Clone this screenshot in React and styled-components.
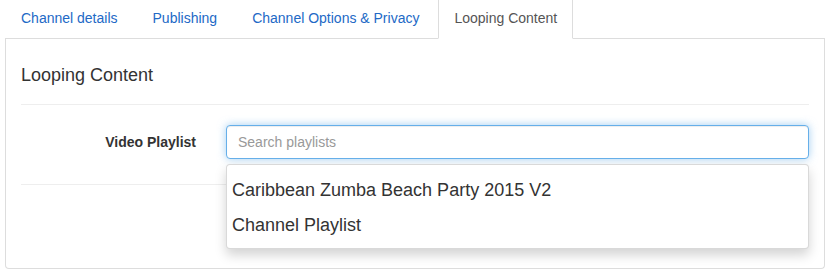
import React from "react";
import styled, { createGlobalStyle } from "styled-components";

const GlobalStyle = createGlobalStyle`
  html, body {
    margin: 0;
    padding: 0;
    background: #fff;
  }
  body {
    font-family: "Liberation Sans", Arial, Helvetica, sans-serif;
    font-size: 14px;
    color: #333;
  }
  * { box-sizing: border-box; }
`;

const Page = styled.div`
  width: 830px;
  padding: 0 5px;
`;

const Tabs = styled.ul`
  display: flex;
  list-style: none;
  margin: 0;
  padding: 0;
  border-bottom: 1px solid #ddd;
  height: 39px;
`;

const Tab = styled.li`
  margin-right: 3px;
  margin-bottom: -1px;
  padding: 8px 15px 10px;
  line-height: 20px;
  font-size: 14px;
  border: 1px solid transparent;
  border-top: none;
  height: 39px;
  color: ${(p) => (p.$active ? "#555" : "#2269c6")};
  background: ${(p) => (p.$active ? "#fff" : "transparent")};
  border-color: ${(p) => (p.$active ? "#ddd #ddd transparent" : "transparent")};
  cursor: pointer;
`;

const Panel = styled.div`
  border: 1px solid #ddd;
  border-top: none;
  border-radius: 0 0 4px 4px;
  padding: 26px 15px 0;
  height: 230px;
`;

const Heading = styled.h4`
  margin: 0;
  font-size: 18px;
  font-weight: 400;
  line-height: 20px;
  color: #333;
`;

const Rule = styled.hr`
  border: 0;
  border-top: 1px solid #eee;
  margin: ${(p) => p.$margin};
`;

const FormRow = styled.div`
  display: grid;
  grid-template-columns: 190px 1fr;
  align-items: center;
`;

const Label = styled.label`
  text-align: right;
  padding-right: 15px;
  font-weight: 700;
  font-size: 14px;
`;

const Field = styled.div`
  position: relative;
  padding-left: 15px;
`;

const Input = styled.input`
  display: block;
  width: 100%;
  height: 34px;
  padding: 6px 11px;
  font-family: inherit;
  font-size: 14px;
  color: #555;
  border: 1px solid #66afe9;
  border-radius: 4px;
  outline: 0;
  box-shadow: inset 0 1px 1px rgba(0, 0, 0, 0.075), 0 0 8px rgba(102, 175, 233, 0.6);
  &::placeholder {
    color: #999;
  }
`;

const Dropdown = styled.ul`
  position: absolute;
  top: 39px;
  left: 15px;
  right: 0;
  margin: 0;
  padding: 8px 0 5px;
  list-style: none;
  background: #fff;
  border: 1px solid rgba(0, 0, 0, 0.15);
  border-radius: 4px;
  box-shadow: 0 6px 12px rgba(0, 0, 0, 0.175);
  z-index: 10;
`;

const Option = styled.li`
  padding: 0 5px;
  line-height: 35px;
  font-size: 18px;
  color: #333;
  cursor: pointer;
`;

const tabs = ["Channel details", "Publishing", "Channel Options & Privacy", "Looping Content"];
const playlists = ["Caribbean Zumba Beach Party 2015 V2", "Channel Playlist"];

export default function App() {
  return (
    <Page>
      <GlobalStyle />
      <Tabs>
        {tabs.map((t) => (
          <Tab key={t} $active={t === "Looping Content"}>
            {t}
          </Tab>
        ))}
      </Tabs>
      <Panel>
        <Heading>Looping Content</Heading>
        <Rule $margin="19px 0 20px" />
        <FormRow>
          <Label>Video Playlist</Label>
          <Field>
            <Input placeholder="Search playlists" />
            <Dropdown>
              {playlists.map((p) => (
                <Option key={p}>{p}</Option>
              ))}
            </Dropdown>
          </Field>
        </FormRow>
        <Rule $margin="25px 0 0" />
      </Panel>
    </Page>
  );
}
